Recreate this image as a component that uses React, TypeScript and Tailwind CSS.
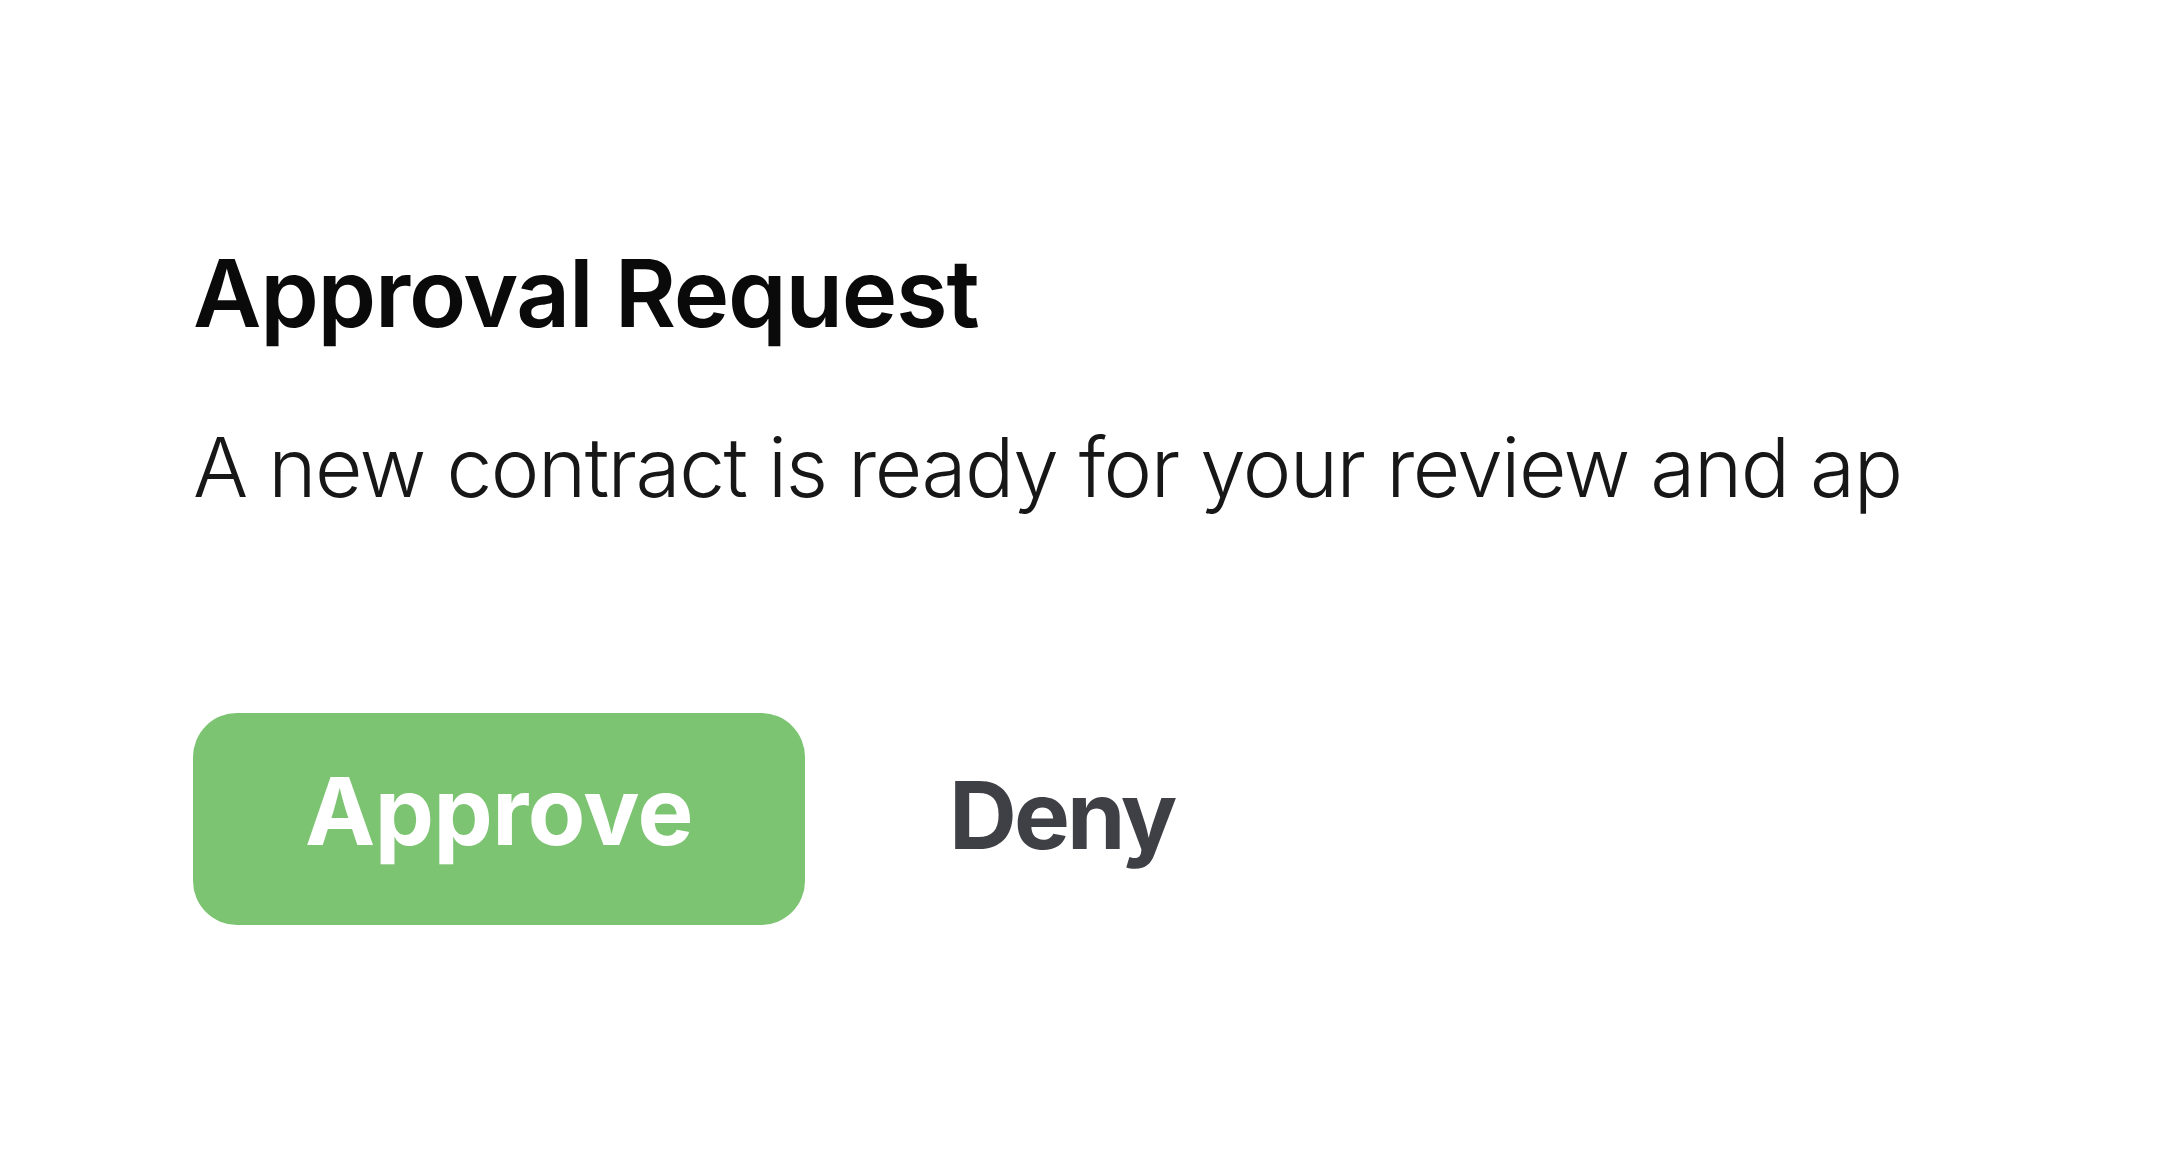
import React from "react";

export default function App() {
  return (
    <div
      className="w-full h-[1176px] bg-white pl-[193px] pt-[246px] overflow-hidden"
      style={{ fontFamily: "Inter, 'Noto Sans', sans-serif" }}
    >
      <h1 className="text-[94px] leading-none font-semibold tracking-[-1.25px] text-[#0a0a0a] whitespace-nowrap">
        Approval Request
      </h1>
      <p className="mt-[87px] text-[82px] leading-none font-light tracking-[-1.5px] text-[#171717] whitespace-nowrap">
        A new contract is ready for your review and ap
      </p>
      <div className="mt-[204px] flex items-start gap-[32px]">
        <button className="w-[612px] h-[212px] rounded-[44px] bg-[#7cc472] text-white text-[94px] leading-none font-bold tracking-[-0.5px] pt-[51px] flex justify-center items-start">
          Approve
        </button>
        <button className="h-[212px] px-[112px] pt-[55px] flex items-start text-[94px] leading-none font-bold tracking-[-3px] text-[#3f3f46]">
          Deny
        </button>
      </div>
    </div>
  );
}
